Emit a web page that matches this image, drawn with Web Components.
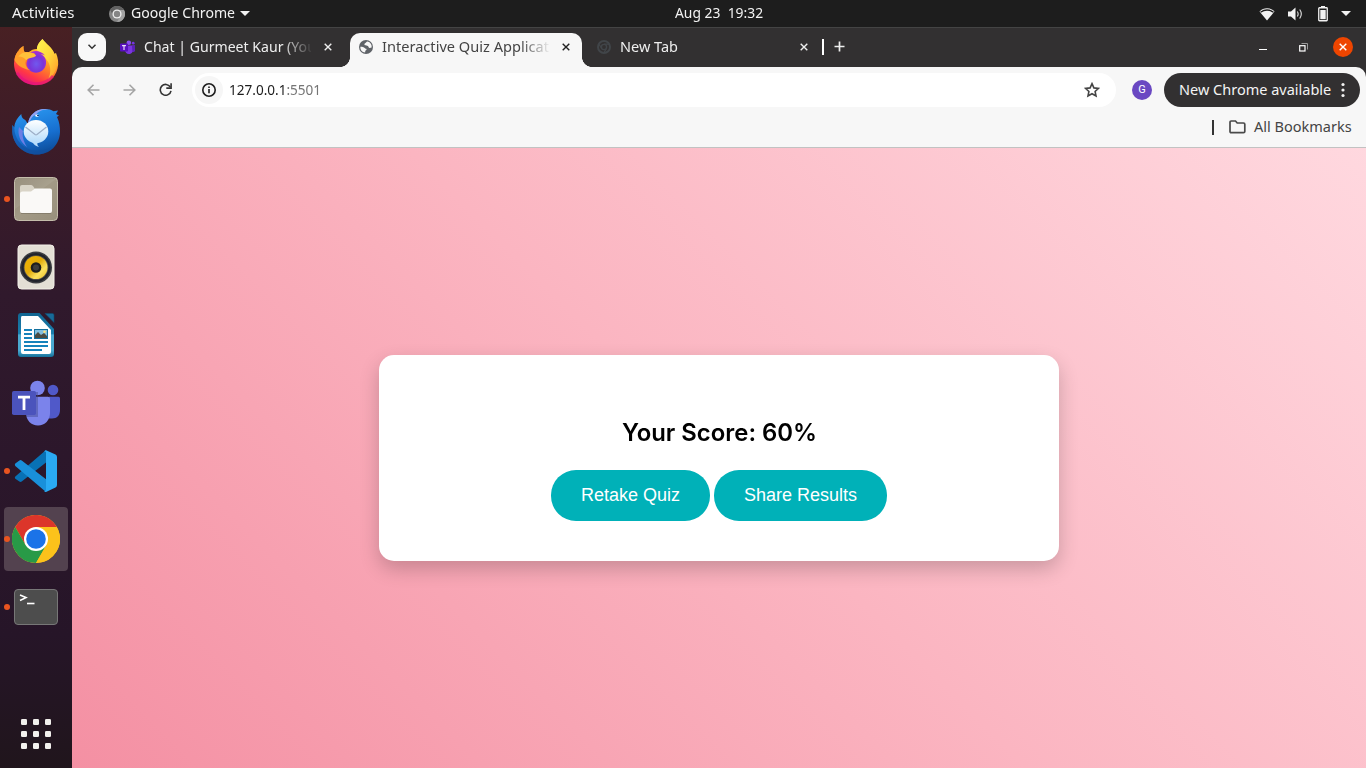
<!DOCTYPE html>
<html lang="en">
<head>
<meta charset="utf-8">
<title>Interactive Quiz Application</title>
<style>
html,body{margin:0;height:100%;overflow:hidden;background:#1d1d1d}
body{font-family:"Noto Sans","Open Sans",sans-serif}
</style>
</head>
<body>
<desktop-shell></desktop-shell>
<script>
const define = (name, html, after) => {
  const t = document.createElement('template');
  t.innerHTML = html;
  customElements.define(name, class extends HTMLElement {
    constructor() {
      super();
      this.attachShadow({mode: 'open'}).append(t.content.cloneNode(true));
    }
    connectedCallback() { if (after) after(this, this.shadowRoot); }
  });
};

/* Icon name -> [width, height, markup] */
const ICONS = {
  firefox: [48,48,`<defs><linearGradient id="a" x1=".8" y1=".05" x2=".3" y2="1"><stop offset="0" stop-color="#fff04a"/><stop offset=".3" stop-color="#ffb52c"/><stop offset=".55" stop-color="#ff7a2a"/><stop offset=".8" stop-color="#ff3647"/><stop offset="1" stop-color="#e31587"/></linearGradient><radialGradient id="b" cx=".5" cy=".6" r=".6"><stop offset="0" stop-color="#7059ee"/><stop offset=".6" stop-color="#7a35d8"/><stop offset="1" stop-color="#b02fd0"/></radialGradient><linearGradient id="c" x1="0" y1="0" x2="1" y2="1"><stop offset="0" stop-color="#fff44f"/><stop offset=".5" stop-color="#ffd83c"/><stop offset="1" stop-color="#ff9a2a"/></linearGradient></defs>
  <path fill="url(#a)" d="M24 46C11 46 2 36.500 2 24.500 2 19 4 15 6 12l.7 2.500C7.500 11 9.500 8.500 11.500 7c-.3 2.500.2 5 1 6.200 1.500-.2 3 0 4 .1C19.500 10.500 23 9.500 26 10c-1.500-3 1-7 4.500-10C33 4 40 8 42.500 15l1.500-1c2 5 3 10 1.500 15.500C43 40 34.500 46 24 46z"/>
  <path fill="url(#c)" d="M30.500 0C33 4.500 40 8 42.500 15l1-.5c3 8 2 20-7.500 26 4-7 2.500-16-2-20.500C30 16 25.500 14.500 25 10c-.3-3 2.500-7 5.500-10z"/>
  <path fill="url(#b)" d="M17 14.500C21 10.500 29 11 33 16.500c-3-1.500-4-1.300-4-1.300 4 2 5.500 5.500 5 9.500-.7 5.500-5 9-10 9s-9.500-4-9.500-9.500z"/>
  <path fill="#ff9f2b" d="M6 12.500C7 10 9 8 11.500 7c-.3 3 .3 5.200 1.500 6.300 4-.5 8 .3 9.500 1.200 1 .8.500 1.800-1 2.500-2.500 1-6 1.500-7.500 4.500-1.500 3.500.5 7.500 4 9.500-8-1-14-6-15.500-10C2.500 18 4 14.500 6 12.500z"/>
  <path fill="#ffc13a" d="M13 13.400c4-.5 8.500.6 10.800 2.600.6 1-.5 1.600-2.300 2.200-2.700 1-5.800.8-7.300 3-1.500-2.500-4-3.700-8-3.800 2-2 4-4 6.800-4z"/>
  <path fill="none" stroke="#e5127b" stroke-width="3" opacity=".65" d="M5 34c8 13.500 27 14 36 3"/>`],
  thunderbird: [48,48,`<defs><linearGradient id="a" x1=".3" y1="0" x2=".6" y2="1"><stop offset="0" stop-color="#2a97f0"/><stop offset=".6" stop-color="#176fd0"/><stop offset="1" stop-color="#0c4c98"/></linearGradient><linearGradient id="b" x1="0" y1="0" x2="0" y2="1"><stop offset="0" stop-color="#fff"/><stop offset="1" stop-color="#b5dcfb"/></linearGradient></defs>
  <path fill="url(#a)" d="M16 17C17 8 24 2 33 2c4 0 6 .7 8.500 2.200l4.500-.6-2 3.500 3 1.400-2 1.500C47.500 15 48 20 48 25 47.500 38 38 47.500 25 47.500 11 47.500 1 37 .3 25l0-7 2 2.500c.5-6 3-9.500 7-13.500 0 3 1.500 5 4 6z"/>
  <path fill="#124f9e" opacity=".6" d="M.3 18l2 2.500c0 10 6 19 17 22.500 8 2 16 0 20-3C36 45 31 47.500 25 47.500 11 47.500 1 37 .3 25z"/>
  <path fill="#93a0f2" d="M16 17C17 8 24 2 33 2l5 1c-7-1-12 1-14 5-3 0-5 3-6.500 8z"/>
  <path fill="#6b7ee5" d="M7 20c-2 8 2 16 8 20-4-6-5-12-4-16z"/>
  <ellipse cx="24" cy="24.500" rx="12.300" ry="11.500" fill="url(#b)"/><path fill="#b9defb" d="M20 35c2 2 3 4 7 5-2-2-2-3-1-5z"/>
  <path fill="none" stroke="#9daec6" stroke-width="1.200" d="M13.500 20l9.500 7.500q1 .7 2 0L34.500 20"/><ellipse cx="25" cy="8.600" rx="1.800" ry="1.200" fill="#fff"/><path fill="#1d3d80" d="M25 8h2v1h-2z"/>`],
  files: [48,48,`<defs><linearGradient id="a" x1="0" y1="0" x2="1" y2="1"><stop offset="0" stop-color="#8f8672"/><stop offset=".5" stop-color="#a29a86"/><stop offset="1" stop-color="#98907c"/></linearGradient></defs><rect x="2.500" y="2.500" width="43" height="43" rx="4" fill="url(#a)" stroke="#c4bdab"/><path d="M44 4L3 34V6q0-2 2-3z" fill="#fff" opacity=".08"/><path d="M8 20v-8q0-2 2-2h9q1 0 2 1l2 3h15v6z" fill="#d9d4c7"/><path d="M8 19q0-2.500 2.500-2.500H19l4-3h15q2 0 2 2V36q0 2-2 2H10q-2 0-2-2z" fill="#faf9f7"/><path d="M9 38.500h30" stroke="#777060" opacity=".6"/>`],
  music: [48,48,`<defs><linearGradient id="a" x1="0" y1="0" x2="1" y2="1"><stop offset="0" stop-color="#f0b400"/><stop offset=".45" stop-color="#e3ac0b"/><stop offset=".7" stop-color="#fbe15f"/><stop offset="1" stop-color="#eabc1d"/></linearGradient></defs><rect x="6" y="2" width="36" height="44" rx="3.500" fill="#e3dfd5" stroke="#f3f0e9"/><circle cx="24" cy="24.500" r="16" fill="#3b3d41"/><circle cx="24" cy="24.500" r="14.500" fill="#20232b"/><circle cx="24" cy="24.500" r="12.300" fill="#59544a"/><circle cx="24" cy="24.500" r="11.500" fill="url(#a)"/><circle cx="24" cy="24.500" r="5.300" fill="#1d1e1e"/><circle cx="24" cy="24.500" r="3" fill="#3c3d3d"/>`],
  writer: [48,48,`<defs><linearGradient id="a" x1="0" y1="0" x2="0" y2="1"><stop offset="0" stop-color="#116591"/><stop offset=".47" stop-color="#1a7fae"/><stop offset=".5" stop-color="#4aa9d0"/><stop offset=".85" stop-color="#4aa9d0"/><stop offset="1" stop-color="#137099"/></linearGradient></defs><path fill="url(#a)" d="M9 2h18.500L42 18v25q0 3-3 3H9q-3 0-3-3V5q0-3 3-3z"/><path fill="#fff" d="M10 5h16l13 14v22q0 2-2 2H11q-2 0-2-2V7q0-2 1-2z"/><path fill="#186a98" stroke="#0e4b70" stroke-width=".6" d="M33 2.500h7.500q1.500 0 1.500 1.500v7.500z"/><path d="M12 19h8M12 23h8M12 27h8M12 31h24M12 35h24M12 39h18" stroke="#1582bb" stroke-width="2"/><rect x="22.500" y="18.500" width="13" height="9" fill="#82bfdf" stroke="#126f9c"/><path d="M23 27v-3l3-3 3 3 3-2 3 3v2z" fill="#4a4b42"/><circle cx="32.500" cy="20.800" r="1.300" fill="#ffe27b"/>`],
  teams: [48,48,`<path d="M37 17.700h9.500q1.500 0 1.500 1.500V31c0 5-3 8.500-8 8.500h-3z" fill="#5059c9"/><circle cx="41" cy="11" r="5.300" fill="#5059c9"/><circle cx="25.500" cy="9" r="7.300" fill="#7b83eb"/><path d="M14 17.700h22q2 0 2 2V34c0 7-5 12.500-12 12.500S14 41 14 34z" fill="#7b83eb"/><path d="M14 13h12v25H14z" fill="#30366f" opacity=".35"/><rect y="12" width="24" height="24" rx="1.800" fill="#4b53bc"/><path d="M6 18.200h12M12 18v13" stroke="#fff" stroke-width="2.800"/>`],
  vscode: [48,48,`<path d="M3.300 31.800q-1-1.200 0-2.400L34 3v12.500L9.700 34.600q-1.300.9-2.300 0z" fill="#0871b5"/><path d="M3.300 16.500q-1 1.200 0 2.400L34 45V32.300L9.700 13.500q-1.300-.9-2.300 0z" fill="#1990da"/><path d="M34 3.300l9.500 4.200q1.500.7 1.500 2.500v28q0 1.800-1.500 2.500L34 45q-1 0-2-1 2 .5 2-1.500V5.500Q34 4 32 4.500q.7-1 2-1.200z" fill="#2aaaf3"/>`],
  chrome: [48,48,`<circle cx="24" cy="24" r="24" fill="#fcc21b"/><path d="M24 12h20.800A24 24 0 0 0 3.200 12L13.600 30z" fill="#dc352a"/><path d="M13.600 30L3.200 12A24 24 0 0 0 24 48l10.400-18z" fill="#289a47"/><path d="M34.400 30L24 48a24 24 0 0 0 20.800-36H24z" fill="#fcc21b"/><circle cx="24" cy="24" r="12" fill="#fff"/><circle cx="24" cy="24" r="9.800" fill="#1b73e8"/>`],
  terminal: [48,48,`<rect x="2.500" y="6.500" width="43" height="35" rx="3.500" fill="#4d4d4d" stroke="#777"/><path d="M8 12l6 2.600L8 17.500" fill="none" stroke="#fff" stroke-width="1.600"/><path d="M15 20.500h7.500" stroke="#fff" stroke-width="1.600"/>`],
  apps: [30,30,`<g fill="#f2f0ed">${[0,12,24].map(y => [0,12,24].map(x => `<rect x="${x}" y="${y}" width="6" height="6" rx="1.300"/>`).join('')).join('')}</g>`],
  chromeMono: [16,16,`<circle cx="8" cy="8" r="8" fill="#868686"/><path d="M8 4h7A8 8 0 0 0 1.100 4L4.500 10z" fill="#626262"/><path d="M11.500 10L8 16A8 8 0 0 0 15 4H8z" fill="#a3a3a3"/><circle cx="8" cy="8" r="4.600" fill="#ededed"/><circle cx="8" cy="8" r="3.200" fill="#858585"/>`],
  chromeDark: [14,14,`<g fill="none" stroke="#414549" stroke-width="2"><circle cx="7" cy="7" r="6"/><circle cx="7" cy="7" r="2.600" stroke-width="1.400"/><path d="M7 4.200h6M4.600 8.500l-3-5M9.400 8.500L6.500 13.300" stroke-width="1.300"/></g>`],
  globe: [14,14,`<circle cx="7" cy="7" r="7" fill="#5f6368"/><path d="M1.300 6.800c2 .1 3.700.4 4.400 1.200.6.800 1.700.5 1.900 1.200.1.900-1.200.9-1.300 1.900l-.2 1.500A5.700 5.700 0 0 1 1.300 6.800zM8.600 1.600c-1.500.3-1.300 1-2.500 1.600-1 .5-.8 1.500-.2 2 .8.600 2.300 0 3 .7.800.8.600 1.800 1.800 2 .8.100 1.200-.6 2-.4A5.800 5.800 0 0 0 8.600 1.600z" fill="#f7f7f7"/>`],
  teamsSmall: [15,14,`<circle cx="8.800" cy="2.800" r="2.300" fill="#8b4df0"/><circle cx="13.200" cy="3.200" r="1.400" fill="#7535df"/><path d="M5 5.500h10v3.700c0 2-1 2.800-2.600 2.800-.8 1.400-2 2-3.500 2C6.500 14 5 12 5 10z" fill="#7b35df"/><path d="M12 5.500h3v3.700c0 2-1 2.800-2.600 2.800z" fill="#5b20b8"/><rect y="3.500" width="8" height="8" rx=".8" fill="#5a0fc0"/><path d="M2 5.700h4M4 5.500v4.500" stroke="#fff"/>`],
  wifi: [16,14,`<path d="M.5 4.500C4.500.300 11.500.300 15.500 4.500L8 13.500z" fill="#f2f2f2"/><path d="M1.500 5.200Q8 .8 14.500 5.200" fill="none" stroke="#1d1d1d" stroke-width="1.300"/>`],
  volume: [15,14,`<path d="M0 4.500h3L7.500.5v13L3 9.500H0z" fill="#f2f2f2"/><path d="M9.300 4.500q1.700 2.500 0 5M11.700 2.500q3.200 4.500 0 9" fill="none" stroke="#e0e0e0" stroke-width="1.100"/>`],
  battery: [10,16,`<path d="M3 0h4v1.500h-4z" fill="#f2f2f2"/><rect x=".75" y="1.750" width="8.500" height="13" rx=".7" fill="none" stroke="#f2f2f2" stroke-width="1.300"/><rect x="2.300" y="4" width="5.400" height="9.200" fill="#f2f2f2"/>`],
  caret: [10,5,`<path d="M0 0h10L5 5z" fill="#f2f2f2"/>`],
  chevron: [10,6,`<path d="M1.500 .8L5 4.300 8.500 .8" fill="none" stroke="#333" stroke-width="1.500"/>`],
  x: [8,8,`<path d="M.7.7l6.600 6.600M7.300.7L.7 7.300" stroke="currentColor" stroke-width="1.400"/>`],
  plus: [11,11,`<path d="M5.500 .5v10M.5 5.500h10" stroke="#eee" stroke-width="1.700"/>`],
  restore: [9,9,`<path d="M2.500.5h6v6" fill="none" stroke="#999"/><rect x=".7" y="2.700" width="5.300" height="5.300" fill="none" stroke="#fff" stroke-width="1.200"/>`],
  back: [13,12,`<path d="M12.500 6H1.500M6.500 .7L1.200 6l5.300 5.300" fill="none" stroke="#a5a5a5" stroke-width="1.600"/>`],
  forward: [13,12,`<path d="M.5 6h11M6.500 .7L11.800 6l-5.300 5.300" fill="none" stroke="#a5a5a5" stroke-width="1.600"/>`],
  reload: [13,13,`<path d="M11.300 4A5.400 5.400 0 1 0 12 7.800" fill="none" stroke="#333" stroke-width="1.600"/><path d="M12.100 .3v4.800H7.300" fill="none" stroke="#333" stroke-width="1.600"/>`],
  info: [14,14,`<circle cx="7" cy="7" r="6.200" fill="none" stroke="#1d1d1d" stroke-width="1.600"/><path d="M7 6v4.300M7 3.400v1.500" stroke="#1d1d1d" stroke-width="1.600"/>`],
  star: [16,16,`<path d="M8 1.700l1.900 4.200 4.600.5-3.400 3.100.9 4.500-4-2.300L4 14l.9-4.500L1.500 6.400l4.600-.5z" fill="none" stroke="#444" stroke-width="1.600"/>`],
  dots: [4,16,`<g fill="#f2f2f2"><circle cx="2" cy="2.500" r="1.600"/><circle cx="2" cy="8" r="1.600"/><circle cx="2" cy="13.500" r="1.600"/></g>`],
  folder: [17,14,`<path d="M1 2.200Q1 1 2.200 1H6.500l1.700 2h6.300q1.300 0 1.300 1.300v7.200q0 1.200-1.300 1.200H2.200Q1 12.700 1 11.500z" fill="none" stroke="#4a4a4a" stroke-width="1.700"/>`]
};

define('ui-icon', `<style>:host{display:block;flex:none}svg{display:block}</style>`, (el, root) => {
  const [w, h, body] = ICONS[el.getAttribute('name')];
  const box = document.createElement('div');
  box.innerHTML = `<svg width="${w}" height="${h}" viewBox="0 0 ${w} ${h}">${body}</svg>`;
  root.append(box);
});

/* One line of text set to a given advance width */
define('fit-text', `<style>:host{display:block;flex:none;white-space:pre;padding-bottom:2px}span{display:inline-block;transform-origin:0 50%}</style><span><slot></slot></span>`, (el, root) => {
  const w = +el.getAttribute('w');
  el.style.width = w + 'px';
  requestAnimationFrame(() => {
    const s = root.querySelector('span');
    s.style.transform = `scaleX(${w / s.offsetWidth})`;
  });
});

define('top-bar', `<style>
:host{display:grid;grid-template-columns:1fr auto 1fr;align-items:center;height:27px;background:#1d1d1d;color:#f2f2f2;font-size:14.500px;line-height:25px}
.l,.r{display:flex;align-items:center}.l{padding-left:12px}
.l ui-icon[name=chromeMono]{margin:0 6px 0 35px}.l ui-icon[name=caret]{margin-left:5px}
.r{justify-content:flex-end;padding-right:15px}
</style>
<div class="l"><fit-text w="62">Activities</fit-text><ui-icon name="chromeMono"></ui-icon><fit-text w="104">Google Chrome</fit-text><ui-icon name="caret"></ui-icon></div>
<fit-text w="88" style="margin-left:72px">Aug 23  19:32</fit-text>
<div class="r"><ui-icon name="wifi"></ui-icon><ui-icon name="volume" style="margin-left:13px"></ui-icon><ui-icon name="battery" style="margin-left:15px"></ui-icon><ui-icon name="caret" style="margin-left:13px"></ui-icon></div>`);

define('dock-item', `<style>
:host{display:flex;position:relative;width:64px;height:64px;margin:0 4px 4px;align-items:center;justify-content:center;border-radius:4px;box-sizing:border-box}
:host([active]){background:#53424f}
:host([running])::before{content:"";position:absolute;left:0;top:29px;width:6px;height:6px;border-radius:50%;background:#e95420}
</style><slot></slot>`);

define('app-dock', `<style>
:host{display:flex;flex-direction:column;width:72px;box-sizing:border-box;padding-top:4px;background:linear-gradient(#482023,#3d1c28 15%,#30192c 36%,#2c172b 58%,#261528 82%,#20151c)}
.apps{margin:auto 21px 19px}
</style>
<dock-item><ui-icon name="firefox"></ui-icon></dock-item>
<dock-item><ui-icon name="thunderbird"></ui-icon></dock-item>
<dock-item running><ui-icon name="files"></ui-icon></dock-item>
<dock-item><ui-icon name="music"></ui-icon></dock-item>
<dock-item><ui-icon name="writer"></ui-icon></dock-item>
<dock-item><ui-icon name="teams"></ui-icon></dock-item>
<dock-item running><ui-icon name="vscode"></ui-icon></dock-item>
<dock-item running active><ui-icon name="chrome"></ui-icon></dock-item>
<dock-item running><ui-icon name="terminal"></ui-icon></dock-item>
<ui-icon class="apps" name="apps"></ui-icon>`);

define('browser-tab', `<style>
:host{display:flex;position:relative;width:232px;height:34px;box-sizing:border-box;align-items:center;padding:0 12px 6px 9px;color:#eee;font-size:14.500px;line-height:28px}
:host([active]){background:#f7f7f7;color:#444;border-radius:10px 10px 0 0}
:host([active])::before,:host([active])::after{content:"";position:absolute;bottom:0;width:10px;height:10px}
:host([active])::before{left:-10px;background:radial-gradient(circle at 0 0,transparent 9.600px,#f7f7f7 10.200px)}
:host([active])::after{right:-10px;background:radial-gradient(circle at 100% 0,transparent 9.600px,#f7f7f7 10.200px)}
.t{width:167px;margin-left:9px;overflow:hidden;-webkit-mask:linear-gradient(90deg,#000 138px,transparent 169px);mask:linear-gradient(90deg,#000 138px,transparent 169px)}
.x{margin-left:auto}:host([active]) .x{color:#222}
</style><slot name="icon"></slot><div class="t"><slot></slot></div><ui-icon class="x" name="x"></ui-icon>`);

define('tab-strip', `<style>
:host{display:flex;height:40px;box-sizing:border-box;border-top:1px solid #444;background:#323031;padding:5px 13px 0 6px;align-items:flex-start}
.s{display:flex;width:28px;height:28px;border-radius:9px;background:#f8f8f8;align-items:center;justify-content:center;margin-right:5px}
.sep{width:2px;height:16px;margin:6px 10px 0 2px;background:#fff}
.min{width:8px;height:1px;background:#fff;margin:16px 32px 0 auto}
.close{display:flex;width:20px;height:20px;border-radius:50%;background:#ee4500;color:#fff;align-items:center;justify-content:center;margin:4px 0 0 36px}
</style>
<div class="s"><ui-icon name="chevron"></ui-icon></div>
<browser-tab style="width:233px"><ui-icon slot="icon" name="teamsSmall"></ui-icon><fit-text w="172">Chat | Gurmeet Kaur (You</fit-text></browser-tab>
<browser-tab active style="margin-left:6px"><ui-icon slot="icon" name="globe"></ui-icon><fit-text w="167">Interactive Quiz Applicat</fit-text></browser-tab>
<browser-tab style="margin-left:6px"><ui-icon slot="icon" name="chromeDark"></ui-icon><fit-text w="58">New Tab</fit-text></browser-tab>
<div class="sep"></div><ui-icon name="plus" style="margin-top:8px"></ui-icon>
<div class="min"></div><ui-icon name="restore" style="margin-top:10px;margin-right:-11px"></ui-icon><div class="close"><ui-icon name="x"></ui-icon></div>`);

define('tool-bar', `<style>
:host{display:block;height:81px;box-sizing:border-box;background:#f7f7f7;border-bottom:1px solid #c2c2c2;border-radius:10px 10px 0 0;font-size:14.500px;color:#444}
.a{display:flex;align-items:center;height:34px;padding:6px 6px 0 15px}
.omni{display:flex;align-items:center;width:924px;height:34px;box-sizing:border-box;border-radius:17px;background:#fff;padding:0 16px 0 3px;margin-left:20px;color:#1d1d1d}
.i{display:flex;width:28px;height:28px;border-radius:50%;background:#f6f6f6;align-items:center;justify-content:center;margin-right:6px}
.g{width:20px;height:20px;border-radius:50%;background:#6a48c2;color:#fff;font:11px/20px Roboto,sans-serif;text-align:center;margin-left:16px}
.new{display:flex;align-items:center;height:34px;width:196px;box-sizing:border-box;border-radius:17px;background:#323031;color:#f4f4f4;padding:0 15px;margin-left:12px;justify-content:space-between}
.b{display:flex;align-items:center;justify-content:flex-end;height:40px;padding-right:14px}
.bar{width:2px;height:15px;background:#333;margin-right:15px}
em{font-style:normal;color:#757575}
</style>
<div class="a"><ui-icon name="back"></ui-icon><ui-icon name="forward" style="margin-left:23px"></ui-icon><ui-icon name="reload" style="margin-left:23px;margin-top:-1px"></ui-icon>
<div class="omni"><div class="i"><ui-icon name="info"></ui-icon></div><fit-text w="92" style="font-size:14px">127.0.0.1<em>:5501</em></fit-text><ui-icon name="star" style="margin-left:auto"></ui-icon></div>
<div class="g">G</div><div class="new"><fit-text w="152">New Chrome available</fit-text><ui-icon name="dots"></ui-icon></div></div>
<div class="b"><div class="bar"></div><ui-icon name="folder" style="margin-right:8px"></ui-icon><fit-text w="98">All Bookmarks</fit-text></div>`);

define('pill-button', `<style>:host{display:inline-block}
button{font:18px/21px "Liberation Sans",Arial,sans-serif;color:#fff;background:#00b1b8;border:0;border-radius:25px;padding:15px 30px;display:block}</style><button><slot></slot></button>`);

define('quiz-result', `<style>
:host{display:flex;flex-direction:column;align-items:center;width:680px;height:206px;box-sizing:border-box;padding-top:60px;background:#fff;border-radius:15px;box-shadow:0 8px 20px rgba(0,0,0,.2)}
h2{margin:0;font:600 24px/36px Inter,sans-serif;color:#000;height:36px}
.r{display:flex;gap:4px;margin-top:19px}
</style><h2><fit-text w="195">Your Score: 60%</fit-text></h2><div class="r"><pill-button>Retake Quiz</pill-button><pill-button>Share Results</pill-button></div>`);

define('browser-window', `<style>
:host{display:flex;flex-direction:column;flex:1;min-width:0;background:#323031}
main{flex:1;display:flex;align-items:center;justify-content:center;background:linear-gradient(45deg,#f490a3,#fbb5c1 50%,#ffd8df)}
</style><tab-strip></tab-strip><tool-bar></tool-bar><main><quiz-result></quiz-result></main>`);

define('desktop-shell', `<style>
:host{display:flex;flex-direction:column;width:1366px;height:768px;overflow:hidden}
div{display:flex;flex:1;min-height:0}
</style><top-bar></top-bar><div><app-dock></app-dock><browser-window></browser-window></div>`);
</script>
</body>
</html>
